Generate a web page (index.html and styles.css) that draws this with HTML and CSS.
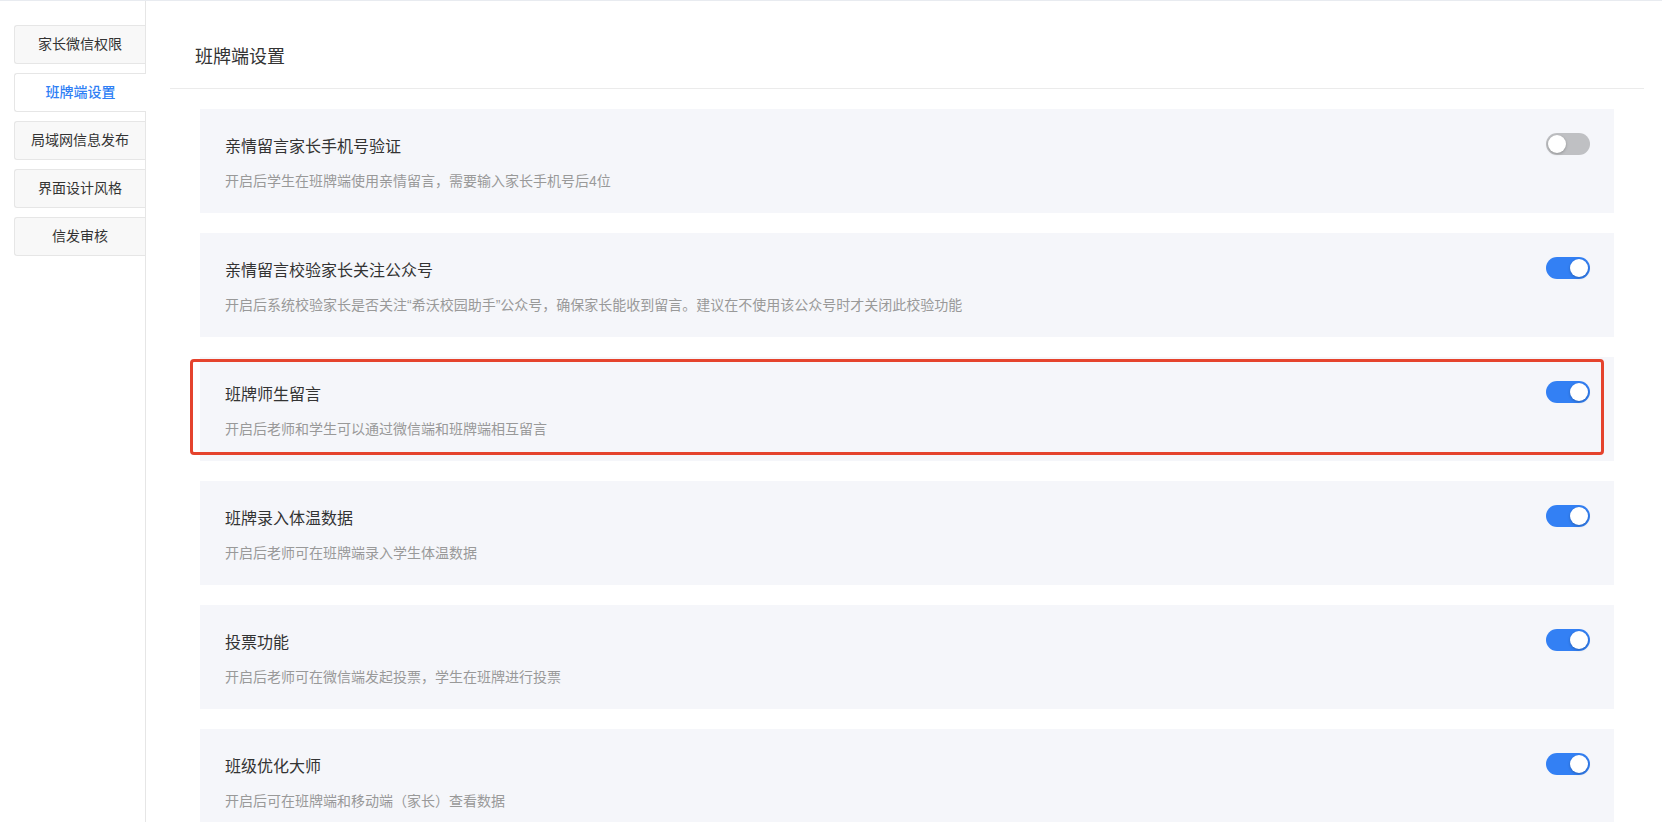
FILE: index.html
```html
<!DOCTYPE html>
<html lang="zh-CN">
<head>
    <meta charset="UTF-8">
    <meta name="viewport" content="width=device-width, initial-scale=1.0">
    <title>班牌端设置</title>
    <link rel="stylesheet" href="styles.css">
</head>
<body>
    <div class="page">
        <aside class="sidebar">
            <ul class="tabs">
                <li class="tab">家长微信权限</li>
                <li class="tab active">班牌端设置</li>
                <li class="tab">局域网信息发布</li>
                <li class="tab">界面设计风格</li>
                <li class="tab">信发审核</li>
            </ul>
        </aside>
        <main class="content">
            <div class="content-header">
                <h2>班牌端设置</h2>
            </div>
            <div class="setting-list">
                <div class="setting">
                    <div class="setting-text">
                        <div class="setting-title">亲情留言家长手机号验证</div>
                        <div class="setting-desc">开启后学生在班牌端使用亲情留言，需要输入家长手机号后4位</div>
                    </div>
                    <span class="switch"></span>
                </div>
                <div class="setting">
                    <div class="setting-text">
                        <div class="setting-title">亲情留言校验家长关注公众号</div>
                        <div class="setting-desc">开启后系统校验家长是否关注“希沃校园助手”公众号，确保家长能收到留言。建议在不使用该公众号时才关闭此校验功能</div>
                    </div>
                    <span class="switch on"></span>
                </div>
                <div class="setting marked">
                    <div class="setting-text">
                        <div class="setting-title">班牌师生留言</div>
                        <div class="setting-desc">开启后老师和学生可以通过微信端和班牌端相互留言</div>
                    </div>
                    <span class="switch on"></span>
                </div>
                <div class="setting">
                    <div class="setting-text">
                        <div class="setting-title">班牌录入体温数据</div>
                        <div class="setting-desc">开启后老师可在班牌端录入学生体温数据</div>
                    </div>
                    <span class="switch on"></span>
                </div>
                <div class="setting">
                    <div class="setting-text">
                        <div class="setting-title">投票功能</div>
                        <div class="setting-desc">开启后老师可在微信端发起投票，学生在班牌进行投票</div>
                    </div>
                    <span class="switch on"></span>
                </div>
                <div class="setting">
                    <div class="setting-text">
                        <div class="setting-title">班级优化大师</div>
                        <div class="setting-desc">开启后可在班牌端和移动端（家长）查看数据</div>
                    </div>
                    <span class="switch on"></span>
                </div>
            </div>
        </main>
    </div>
</body>
</html>
```

FILE: styles.css
```css
html, body {
    height: 100%;
}
body {
    margin: 0;
    overflow: hidden;
    background-color: #fff;
    font-family: "Liberation Sans", "Noto Sans CJK SC", sans-serif;
    color: #333;
}

.page {
    display: flex;
    min-height: 100%;
    border-top: 1px solid #e8ebf0;
    box-sizing: border-box;
}

/* 左侧标签 */
.sidebar {
    width: 146px;
    flex-shrink: 0;
    box-sizing: border-box;
    border-right: 1px solid #e6e6e6;
    padding: 24px 0 0 14px;
}
.tabs {
    list-style-type: none;
    margin: 0;
    padding: 0;
}
.tab {
    height: 39px;
    box-sizing: border-box;
    margin-bottom: 9px;
    border: 1px solid #e6e6e6;
    border-right: none;
    border-radius: 3px 0 0 3px;
    background-color: #f8f8f8;
    font-size: 14px;
    line-height: 37px;
    text-align: center;
    color: #333;
}
.tab.active {
    position: relative;
    margin-right: -1px;
    background-color: #fff;
    color: #2f7ff5;
    font-weight: 500;
}

/* 右侧内容 */
.content {
    flex: 1;
    margin: 0 18px 0 24px;
}
.content-header {
    height: 88px;
    box-sizing: border-box;
    border-bottom: 1px solid #ebebeb;
    padding: 44px 0 0 25px;
}
.content-header h2 {
    margin: 0;
    font-size: 18px;
    font-weight: normal;
    line-height: 24px;
    color: #333;
}

.setting-list {
    padding: 20px 30px 0;
}
.setting {
    display: flex;
    justify-content: space-between;
    align-items: flex-start;
    height: 104px;
    box-sizing: border-box;
    margin-bottom: 20px;
    padding: 26px 24px 0 25px;
    background-color: #f5f6fa;
}
.setting-title {
    font-size: 16px;
    line-height: 24px;
    color: #333;
}
.setting-desc {
    margin-top: 12px;
    font-size: 14px;
    line-height: 20px;
    color: #999;
}

/* 标注框 */
.setting.marked {
    position: relative;
}
.setting.marked::after {
    content: "";
    position: absolute;
    top: 2px;
    right: 10px;
    bottom: 6px;
    left: -10px;
    border: 3px solid #e5432d;
    border-radius: 4px;
}

/* 开关 */
.switch {
    position: relative;
    flex-shrink: 0;
    width: 44px;
    height: 22px;
    margin-top: -2px;
    border-radius: 11px;
    background-color: #bfc0c3;
}
.switch::before {
    content: "";
    position: absolute;
    top: 2px;
    left: 2px;
    width: 18px;
    height: 18px;
    border-radius: 50%;
    background-color: #fff;
    box-shadow: 0 1px 3px rgba(0, 0, 0, 0.25);
}
.switch.on {
    background-color: #3380f4;
}
.switch.on::before {
    left: 24px;
}
```
